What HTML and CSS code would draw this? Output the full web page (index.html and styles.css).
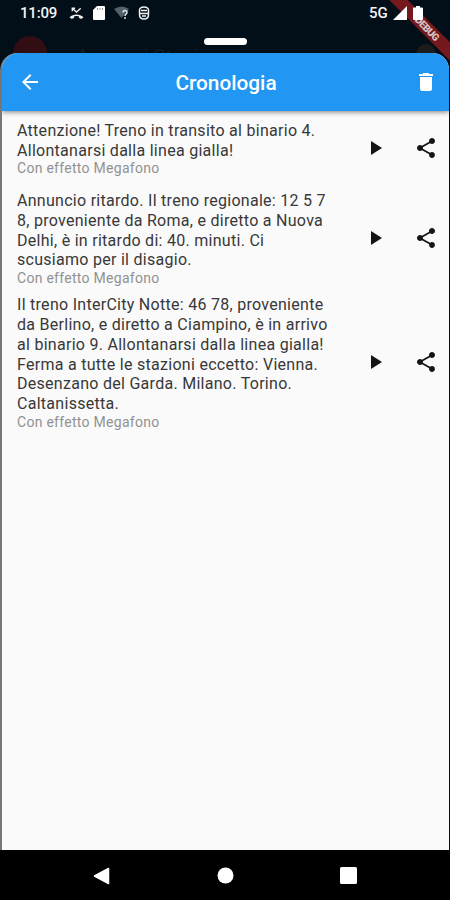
FILE: index.html
```
<!DOCTYPE html>
<html lang="it">
<head>
<meta charset="utf-8">
<title>Cronologia</title>
<link rel="stylesheet" href="styles.css">
</head>
<body>
<svg class="defs" aria-hidden="true">
  <symbol id="play" viewBox="0 0 24 24"><path d="M8 5v14l11-7z"/></symbol>
  <symbol id="share" viewBox="0 0 24 24"><path d="M18 16.08c-.76 0-1.44.3-1.96.77L8.91 12.7c.05-.23.09-.46.09-.7s-.04-.47-.09-.7l7.05-4.11c.54.5 1.25.81 2.04.81 1.66 0 3-1.34 3-3s-1.34-3-3-3-3 1.34-3 3c0 .24.04.47.09.7L8.04 9.81C7.5 9.31 6.79 9 6 9c-1.66 0-3 1.34-3 3s1.34 3 3 3c.79 0 1.5-.31 2.04-.81l7.12 4.16c-.05.21-.08.43-.08.65 0 1.61 1.31 2.92 2.92 2.92s2.92-1.31 2.92-2.92-1.31-2.92-2.92-2.92z"/></symbol>
</svg>
<div class="phone">
  <div class="backdrop">
    <header class="status">
      <span class="time">11:09</span>
      <svg class="s-icon missed" viewBox="0 0 16 14"><path d="M3.500 2l4.500 4 4.500-4M3.500 5V2h3" fill="none" stroke="#eee" stroke-width="1.500"/><path d="M.5 11.500C5 7.500 11 7.500 15.500 11.500L13 13.500l-2.500-1.500v-1.500Q8 9.900 5.500 10.500v1.500l-2.500 1.500z" fill="#eee"/></svg>
      <svg class="s-icon sd" viewBox="0 0 12 14"><path d="M4 0h7q1 0 1 1v12q0 1-1 1H1q-1 0-1-1V4z" fill="#fff"/><path d="M4.500 2v2M7 2v2M9.500 2v2" stroke="#999"/></svg>
      <svg class="s-icon wifi" viewBox="0 0 16 14"><path d="M0 3Q8-2 15 3L7.500 12z" fill="#52606a"/><path d="M9 6.500q0-2 2-2t2 2q0 1-1 1.700t-1 1.800M11 11v2" fill="none" stroke="#dde1e4" stroke-width="1.500"/></svg>
      <svg class="s-icon face" viewBox="0 0 12 14"><path d="M1.500 4Q2 1 6 1t4.500 3v4.500q0 4.500-4.500 4.500t-4.500-4.500z" fill="none" stroke="#eee" stroke-width="1.500"/><path d="M2 7.500h8M3 4.500h6M4 10h4" stroke="#eee" stroke-width="1.400"/></svg>
      <span class="network">5G</span>
      <svg class="s-icon signal" viewBox="0 0 14 14"><path d="M14 0v14H0z" fill="#fff"/></svg>
      <svg class="s-icon battery" viewBox="0 0 10 14"><path d="M3 0h4v1.500h2q1 0 1 1V13q0 1-1 1H1q-1 0-1-1V2.500q0-1 1-1h2z" fill="#fff"/></svg>
    </header>
    <div class="dim-logo"></div>
    <div class="dim-title">Annunci Stazione</div>
    <div class="dim-dot"></div>
    <div class="handle"></div>
    <div class="debug">DEBUG</div>
  </div>
  <main class="sheet">
    <div class="appbar">
      <svg class="back" viewBox="0 0 24 24"><path d="M20 11H7.830l5.590-5.590L12 4l-8 8 8 8 1.410-1.410L7.830 13H20z"/></svg>
      <h1>Cronologia</h1>
      <svg class="trash" viewBox="0 0 24 24"><path d="M6 19c0 1.100.9 2 2 2h8c1.100 0 2-.9 2-2V7H6zM19 4h-3.500l-1-1h-5l-1 1H5v2h14z"/></svg>
    </div>
    <section class="list">
      <article class="item first">
        <div class="copy">
          <p>Attenzione! Treno in transito al binario 4.<br>Allontanarsi dalla linea gialla!</p>
          <small>Con effetto Megafono</small>
        </div>
        <svg class="play"><use href="#play"/></svg>
        <svg class="share"><use href="#share"/></svg>
      </article>
      <article class="item">
        <div class="copy">
          <p>Annuncio ritardo. Il treno regionale: 12 5 7<br>8, proveniente da Roma, e diretto a Nuova<br>Delhi, è in ritardo di: 40. minuti. Ci<br>scusiamo per il disagio.</p>
          <small>Con effetto Megafono</small>
        </div>
        <svg class="play"><use href="#play"/></svg>
        <svg class="share"><use href="#share"/></svg>
      </article>
      <article class="item">
        <div class="copy">
          <p>Il treno InterCity Notte: 46 78, proveniente<br>da Berlino, e diretto a Ciampino, è in arrivo<br>al binario 9. Allontanarsi dalla linea gialla!<br>Ferma a tutte le stazioni eccetto: Vienna.<br>Desenzano del Garda. Milano. Torino.<br>Caltanissetta.</p>
          <small>Con effetto Megafono</small>
        </div>
        <svg class="play"><use href="#play"/></svg>
        <svg class="share"><use href="#share"/></svg>
      </article>
    </section>
  </main>
  <nav class="navbar">
    <svg viewBox="0 0 18 18"><path d="M15.500 1.500v15L1.500 9z" fill="#fff" stroke="#fff" stroke-width="1.500" stroke-linejoin="round"/></svg>
    <svg viewBox="0 0 18 18"><circle cx="9.500" cy="8.500" r="8" fill="#fff"/></svg>
    <svg viewBox="0 0 18 18"><rect x="1" y="0" width="17" height="17" rx="1.500" fill="#fff"/></svg>
  </nav>
</div>
</body>
</html>
```
FILE: styles.css
```
* { box-sizing: border-box; }
body { margin: 0; font-family: Roboto, "Liberation Sans", sans-serif; }
.defs { position: absolute; width: 0; height: 0; }
.phone { width: 450px; height: 900px; display: flex; flex-direction: column; background: #020f18; overflow: hidden; position: relative; }
.backdrop { height: 53px; flex: none; position: relative; }
.status { display: flex; align-items: center; height: 26px; padding-left: 20px; color: #f4f4f4; position: relative; z-index: 1; }
.time { font-size: 15px; font-weight: 500; width: 49px; letter-spacing: -.2px; }
.s-icon { flex: none; height: 14px; }
.missed { width: 15px; }
.sd { width: 12px; margin-left: 9px; }
.wifi { width: 16px; margin-left: 9px; }
.face { width: 12px; margin-left: 8px; }
.network { font-size: 15px; font-weight: 500; margin-left: 219px; width: 24px; }
.signal { width: 14px; }
.battery { width: 10px; margin-left: 6px; }
.dim-logo { position: absolute; left: 13px; top: 36px; width: 34px; height: 34px; border-radius: 50%; background: #320d12; }
.dim-title { position: absolute; left: 76px; top: 47px; font-size: 20px; line-height: 20px; color: #131c22; }
.dim-dot { position: absolute; left: 416px; top: 44px; width: 20px; height: 20px; border-radius: 50%; background: #1c1b1c; }
.handle { position: absolute; left: 204px; top: 38px; width: 43px; height: 7px; border-radius: 4px; background: #fff; }
.debug { position: absolute; left: 371px; top: 21px; width: 110px; height: 13px; background: #74191e; transform: rotate(45deg); font-size: 10px; line-height: 13px; font-weight: 900; text-align: center; text-indent: 3px; color: #d9c5c6; letter-spacing: -.5px; }
.sheet { flex: 1; margin: 0 1px 0 2px; background: #fafafa; border-radius: 17px 17px 0 0; overflow: hidden; position: relative; box-shadow: -1px 0 0 1px #777; clip-path: inset(0 -1px 0 -2px round 17px 17px 0 0); }
.appbar { height: 58px; background: #2196f3; display: flex; align-items: center; justify-content: space-between; padding: 0 11px 0 16px; box-shadow: 0 1px 5px rgba(0,0,0,.5); position: relative; }
.appbar svg { width: 24px; height: 24px; fill: #fff; }
.appbar h1 { margin: 1px 4px 0 0; font-size: 20.800px; font-weight: 500; color: #fff; line-height: 26px; }
.list { padding-top: 1px; }
.item { display: flex; align-items: center; padding: 4px 10px 4px 15px; }
.first { height: 72px; margin-bottom: 2px; }
.copy { width: 345px; flex: none; padding-top: 1px; margin-bottom: -1px; }
.copy p { margin: 0; font-size: 16px; line-height: 19.800px; color: #383838; white-space: nowrap; letter-spacing: .28px; font-weight: 400; }
.copy small { display: block; font-size: 14px; line-height: 17px; color: #929292; letter-spacing: .28px; }
.play, .share { width: 24px; height: 24px; flex: none; fill: #151515; }
.play { margin-left: 1px; }
.share { margin-left: 26.500px; }
.navbar { height: 50px; flex: none; background: #000; display: flex; justify-content: space-between; align-items: center; padding: 2px 93px 0 93px; }
.navbar svg { width: 18px; height: 18px; }
```
